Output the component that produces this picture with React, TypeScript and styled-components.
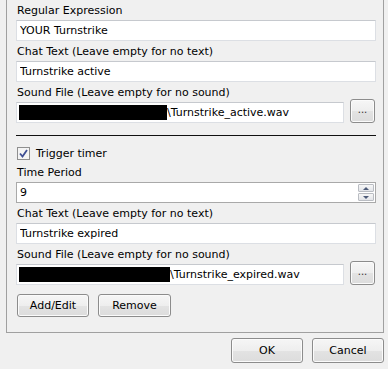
import React from 'react';
import styled, { createGlobalStyle } from 'styled-components';

const GlobalStyle = createGlobalStyle`
  html, body {
    margin: 0;
    padding: 0;
    background: #f0f0f0;
  }
  body {
    font-family: "DejaVu Sans", Verdana, sans-serif;
    font-size: 11px;
    color: #000;
  }
`;

const Window = styled.div`
  width: 388px;
  height: 369px;
  display: flex;
  flex-direction: column;
  background: #f0f0f0;
  overflow: hidden;
`;

const Panel = styled.div`
  margin-left: 6px;
  width: 378px;
  box-sizing: border-box;
  border: 1px solid #a0a0a0;
  border-top: none;
  padding: 4px 7px 15px 9px;
  display: flex;
  flex-direction: column;
`;

const Field = styled.div<{ $top?: number }>`
  display: flex;
  flex-direction: column;
  gap: 3px;
  margin-top: ${p => (p.$top ?? 4)}px;
  &:first-child {
    margin-top: 0;
  }
`;

const Label = styled.label`
  line-height: 13px;
  height: 13px;
  padding-left: 1px;
  white-space: nowrap;
`;

const TextBox = styled.input`
  box-sizing: border-box;
  height: 21px;
  width: 100%;
  margin: 0;
  padding: 0 3px;
  font: inherit;
  color: #000;
  background: #fff;
  border: 1px solid #dcdfe4;
  border-top-color: #c6c9ce;
  outline: none;
`;

const FileRow = styled.div`
  display: flex;
  align-items: flex-start;
  gap: 6px;
  padding-right: 1px;
`;

const FileBox = styled.div`
  box-sizing: border-box;
  flex: 1;
  height: 21px;
  padding: 0 3px 0 2px;
  display: flex;
  align-items: center;
  background: #fff;
  border: 1px solid #dcdfe4;
  border-top-color: #c6c9ce;
  white-space: nowrap;
  overflow: hidden;
`;

const Redacted = styled.span<{ $w: number }>`
  display: inline-block;
  width: ${p => p.$w}px;
  height: 15px;
  background: #000;
  flex-shrink: 0;
`;

const Button = styled.button<{ $w?: number; $h?: number }>`
  box-sizing: border-box;
  width: ${p => p.$w ?? 72}px;
  height: ${p => p.$h ?? 23}px;
  margin: 0;
  padding: 0;
  font: inherit;
  font-size: 11px;
  color: #000;
  border: 1px solid #8c8c8c;
  border-radius: 3px;
  background: linear-gradient(#f6f6f6 0%, #eeeeee 50%, #e3e3e3 51%, #dcdcdc 100%);
  box-shadow: inset 0 0 0 1px #fbfbfb;
  display: flex;
  align-items: center;
  justify-content: center;
`;

const BrowseButton = styled(Button)`
  margin-top: -3px;
  font-size: 10px;
  letter-spacing: 0;
  color: #333;
  padding-bottom: 3px;
`;

const Separator = styled.div`
  height: 1px;
  background: #111;
  margin-top: 12px;
`;

const CheckRow = styled.div`
  display: flex;
  align-items: center;
  gap: 6px;
  margin-top: 11px;
  height: 13px;
`;

const CheckBox = styled.span`
  box-sizing: border-box;
  width: 13px;
  height: 13px;
  border: 1px solid #8f8f8f;
  background: #f4f4f4;
  display: flex;
  align-items: center;
  justify-content: center;
  margin-left: 1px;

  svg {
    display: block;
  }
`;

const CheckText = styled.span`
  line-height: 13px;
`;

const NumberBox = styled.div`
  box-sizing: border-box;
  height: 21px;
  display: flex;
  align-items: center;
  background: #fff;
  border: 1px solid #a9a9a9;
  padding-left: 3px;
`;

const NumberValue = styled.span`
  flex: 1;
`;

const Spinner = styled.div`
  display: flex;
  flex-direction: column;
  gap: 1px;
  width: 16px;
  margin-right: 1px;
`;

const SpinButton = styled.span`
  box-sizing: border-box;
  height: 8px;
  border: 1px solid #b9bcc2;
  border-radius: 1px;
  background: linear-gradient(#f7f7f7, #e2e4e8);
  display: flex;
  align-items: center;
  justify-content: center;
`;

const Arrow = styled.span<{ $up?: boolean }>`
  width: 0;
  height: 0;
  border-left: 3px solid transparent;
  border-right: 3px solid transparent;
  ${p => (p.$up ? 'border-bottom: 3px solid #4d5b78;' : 'border-top: 3px solid #4d5b78;')}
`;

const ActionRow = styled.div`
  display: flex;
  gap: 9px;
  margin-top: 9px;
  padding-left: 1px;
`;

const Footer = styled.div`
  display: flex;
  justify-content: flex-end;
  gap: 9px;
  margin-top: 5px;
  padding-right: 4px;
`;

function SoundField({ name, redact }: { name: string; redact: number }) {
  return (
    <Field>
      <Label>Sound File (Leave empty for no sound)</Label>
      <FileRow>
        <FileBox>
          <Redacted $w={redact} />
          <span>{name}</span>
        </FileBox>
        <BrowseButton $w={25} $h={24}>...</BrowseButton>
      </FileRow>
    </Field>
  );
}

export default function App() {
  return (
    <Window>
      <GlobalStyle />
      <Panel>
        <Field>
          <Label>Regular Expression</Label>
          <TextBox readOnly value="YOUR Turnstrike" />
        </Field>
        <Field>
          <Label>Chat Text (Leave empty for no text)</Label>
          <TextBox readOnly value="Turnstrike active" />
        </Field>
        <SoundField name="\Turnstrike_active.wav" redact={148} />

        <Separator />

        <CheckRow>
          <CheckBox>
            <svg width="9" height="9" viewBox="0 0 9 9">
              <path d="M1 4.5 L3.5 7.5 L8 1" fill="none" stroke="#3f4f94" strokeWidth="1.8" />
            </svg>
          </CheckBox>
          <CheckText>Trigger timer</CheckText>
        </CheckRow>

        <Field $top={6}>
          <Label>Time Period</Label>
          <NumberBox>
            <NumberValue>9</NumberValue>
            <Spinner>
              <SpinButton><Arrow $up /></SpinButton>
              <SpinButton><Arrow /></SpinButton>
            </Spinner>
          </NumberBox>
        </Field>
        <Field>
          <Label>Chat Text (Leave empty for no text)</Label>
          <TextBox readOnly value="Turnstrike expired" />
        </Field>
        <SoundField name="\Turnstrike_expired.wav" redact={151} />

        <ActionRow>
          <Button $w={72}>Add/Edit</Button>
          <Button $w={73}>Remove</Button>
        </ActionRow>
      </Panel>
      <Footer>
        <Button $w={72} $h={25}>OK</Button>
        <Button $w={72} $h={25}>Cancel</Button>
      </Footer>
    </Window>
  );
}
